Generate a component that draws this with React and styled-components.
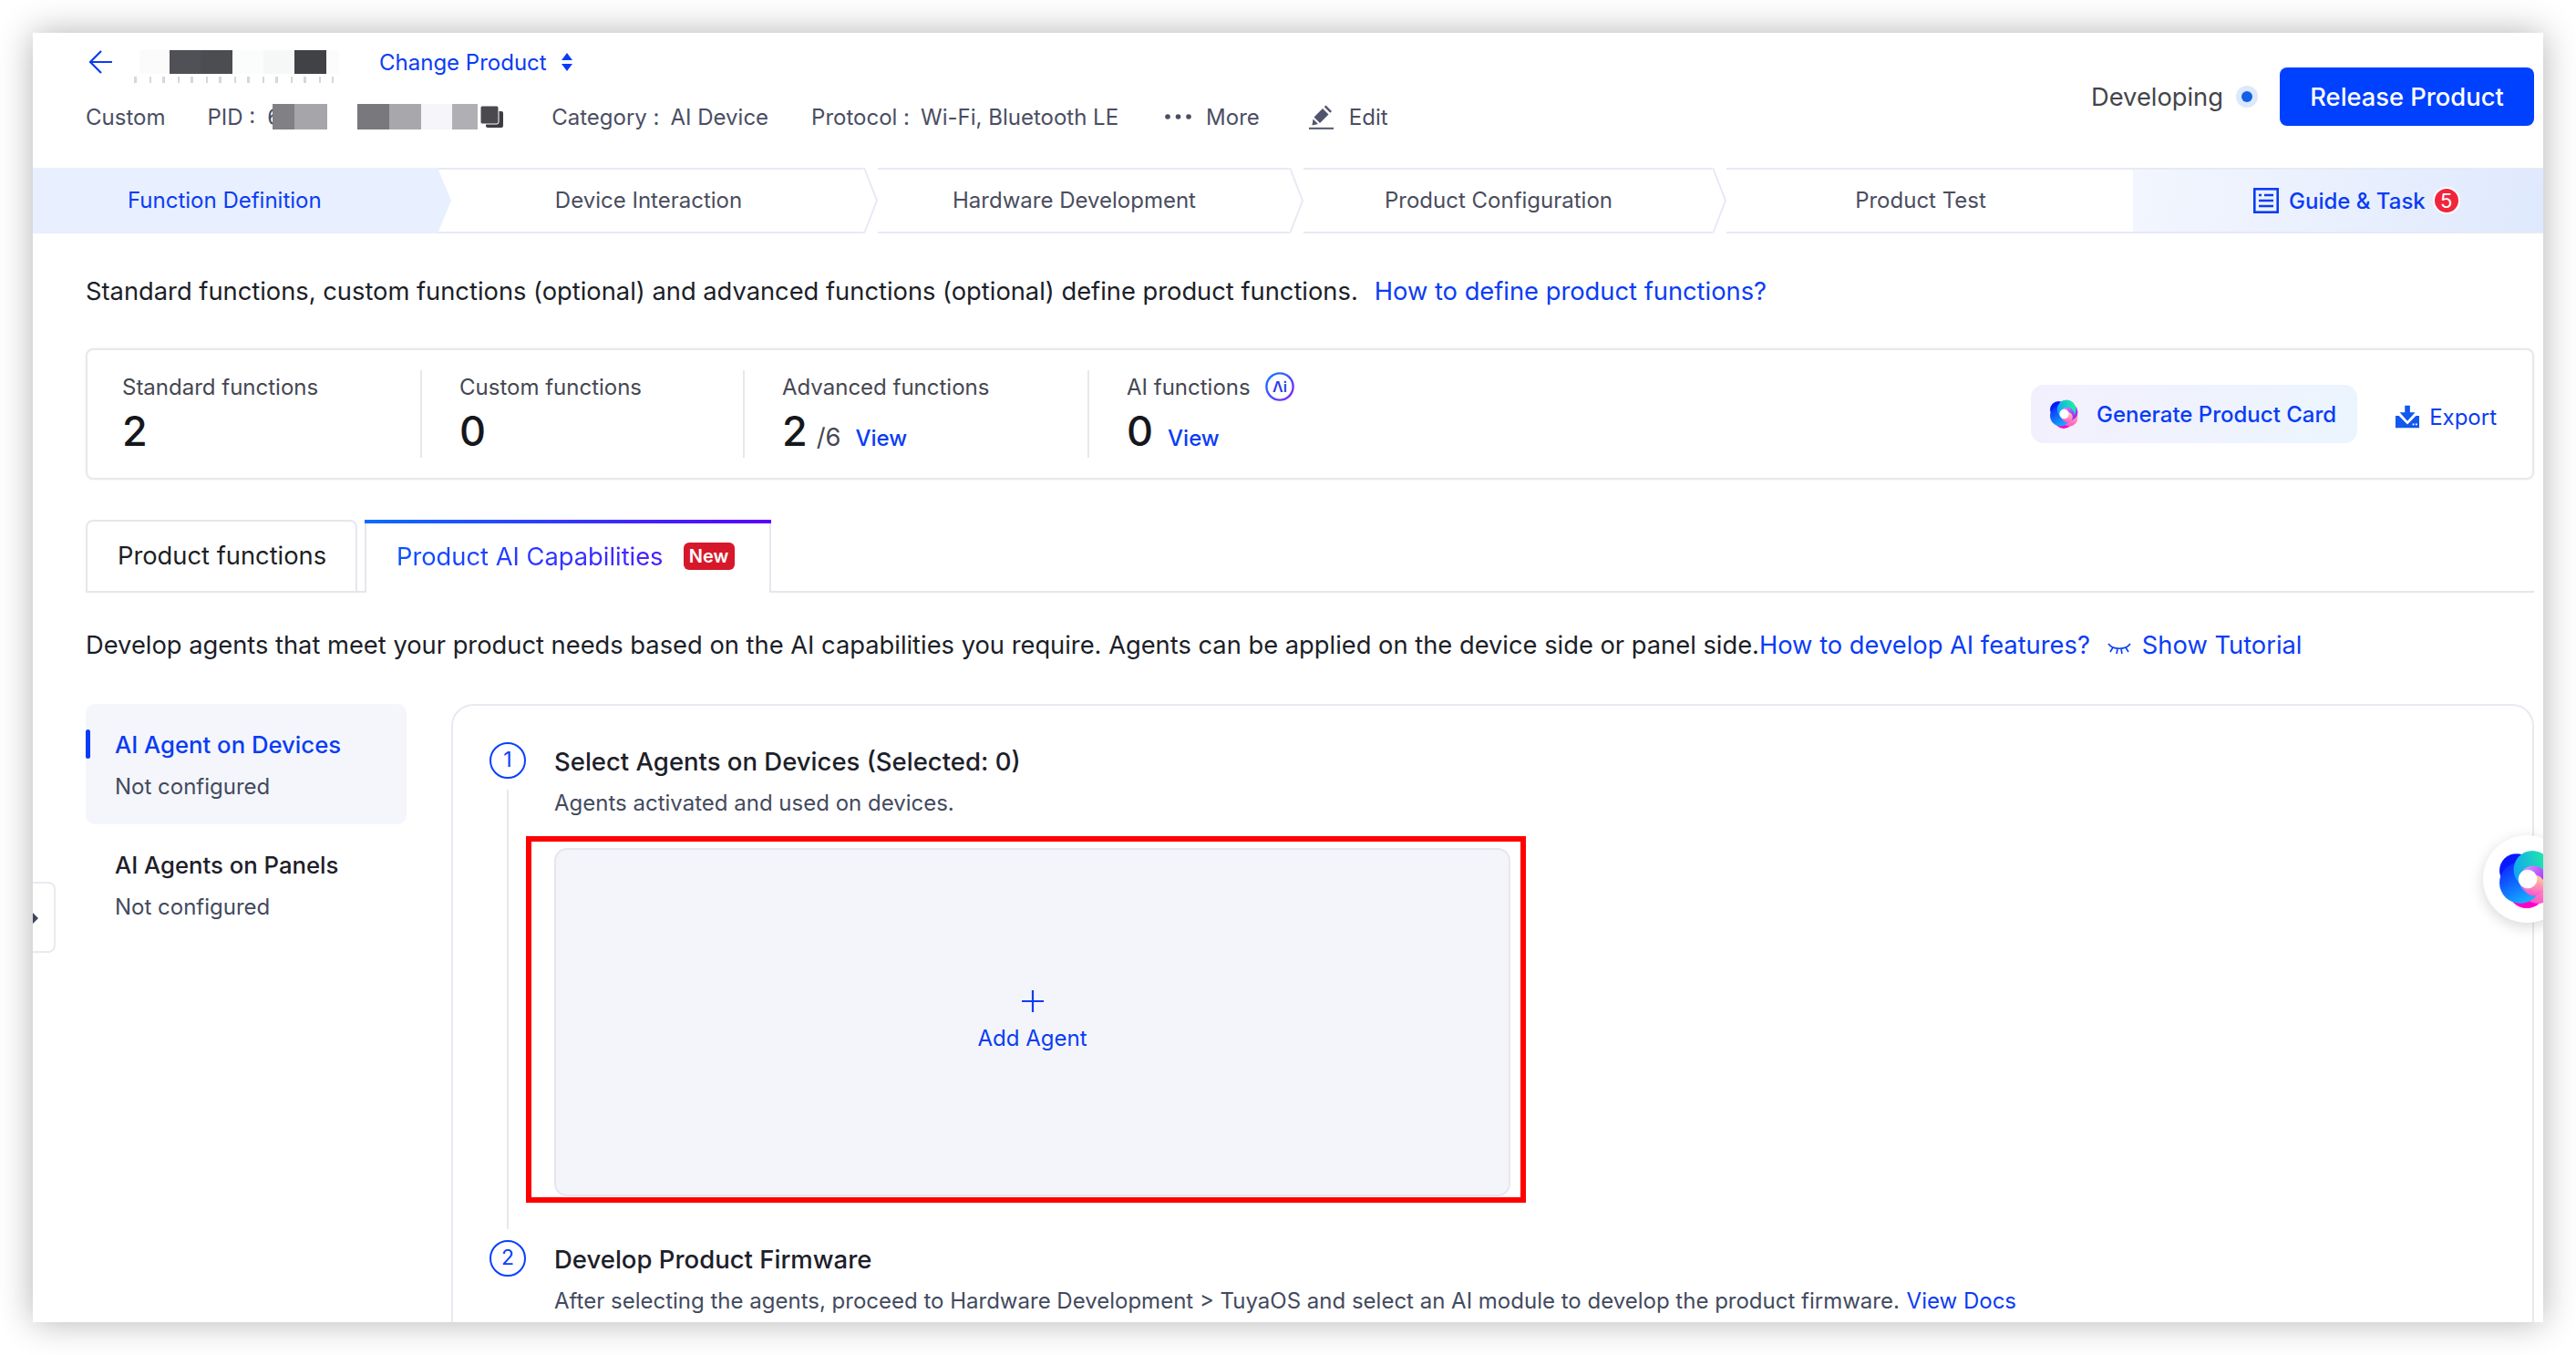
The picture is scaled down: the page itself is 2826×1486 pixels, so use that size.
import React from 'react';
import styled, { createGlobalStyle } from 'styled-components';

const Global = createGlobalStyle`
  html, body { margin: 0; padding: 0; background: #fff; }
  * { box-sizing: border-box; }
  body { font-family: Inter, "Noto Sans CJK SC", sans-serif; }
`;

const Page = styled.div`
  width: 2826px;
  height: 1486px;
  padding: 36px;
  overflow: hidden;
`;

const Window = styled.div`
  position: relative;
  width: 2754px;
  height: 1414px;
  background: #fff;
  overflow: hidden;
  box-shadow: 0 0 36px rgba(0, 0, 0, 0.3);
`;

/* watermark */
const Marks = styled.div`
  position: absolute;
  inset: 0;
  overflow: hidden;
  pointer-events: none;
  z-index: 5;
`;

const MarkRow = styled.div`
  display: flex;
  height: 172px;
  margin-left: ${(p) => p.$shift}px;
`;

const Mark = styled.span`
  flex: 0 0 402px;
  font-size: 38px;
  line-height: 172px;
  color: rgba(30, 30, 60, 0.022);
  white-space: nowrap;
  transform: rotate(-30deg);
`;

/* header */
const Head = styled.header`
  display: flex;
  justify-content: space-between;
  height: 148px;
  padding: 8px 10px 0 58px;
`;

const HeadLeft = styled.div`
  display: flex;
  flex-direction: column;
  gap: 12px;
`;

const HeadRow = styled.div`
  display: flex;
  align-items: center;
  height: 48px;
  font-size: 24px;
  color: #4a4e63;
  white-space: nowrap;
`;

const Redact = styled.div`
  position: relative;
  display: flex;
  flex: 0 0 auto;
  height: ${(p) => p.$h}px;
  margin: ${(p) => p.$m || '0'};
`;

const Patch = styled.span`
  display: block;
  width: ${(p) => p.$w}px;
  background: ${(p) => p.$c};
`;

const Crumbs = styled.span`
  position: absolute;
  left: -6px;
  right: 6px;
  top: 29px;
  height: 7px;
  background: repeating-linear-gradient(90deg, #8a8c94 0 3px, transparent 3px 17px, #8a8c94 17px 19px, transparent 19px 31px);
  opacity: 0.35;
`;

const BlueLink = styled.a`
  color: #0a3cf5;
  font-size: ${(p) => p.$size || 24}px;
  margin: ${(p) => p.$m || '0'};
  white-space: nowrap;
`;

const MetaItem = styled.span`
  display: inline-flex;
  align-items: center;
  margin-left: ${(p) => p.$ml || 0}px;
`;

const MetaKey = styled.span`
  margin-right: ${(p) => p.$mr || 14}px;
`;

const PidStart = styled.span`
  display: block;
  width: 6px;
  overflow: hidden;
`;

const HeadRight = styled.div`
  display: flex;
  align-items: center;
  height: 64px;
  margin-top: 30px;
`;

const Status = styled.span`
  font-size: 27.3px;
  color: #444549;
`;

const StatusDot = styled.span`
  display: flex;
  align-items: center;
  justify-content: center;
  width: 24px;
  height: 24px;
  margin: 0 24px 0 14px;
  border-radius: 50%;
  background: #dce8fb;

  &::after {
    content: '';
    width: 12px;
    height: 12px;
    border-radius: 50%;
    background: #1260e8;
  }
`;

const Release = styled.button`
  width: 279px;
  height: 64px;
  border: 0;
  border-radius: 8px;
  background: #0040ff;
  color: #fff;
  font: 500 27.3px Inter, sans-serif;
`;

/* steps */
const Steps = styled.nav`
  display: flex;
  height: 72px;
  font-size: 24px;
  color: #4a4d5e;
`;

const ActiveStep = styled.div`
  flex: 0 0 459px;
  margin-right: -15px;
  padding-left: 104px;
  line-height: 72px;
  color: #0a3cf5;
  background: #e8effe;
  clip-path: polygon(0 0, 444px 0, 459px 50%, 444px 100%, 0 100%);
  position: relative;
  z-index: 1;
`;

const Step = styled.div`
  position: relative;
  flex: 0 0 ${(p) => p.$w}px;
  padding-right: 4px;
  line-height: 68px;
  text-align: center;
  border-top: 2px solid #e6eaf5;
  border-bottom: 2px solid #e6eaf5;
`;

const Chevron = styled.svg`
  position: absolute;
  top: -2px;
  right: -16px;
  width: 16px;
  height: 72px;
  background: #fff;
  z-index: 1;
`;

const Guide = styled.div`
  flex: 1;
  display: flex;
  align-items: center;
  padding-left: 132px;
  color: #0a3cf5;
  font-weight: 500;
  background: linear-gradient(100deg, #f3f6fe 0%, #dfe9fd 100%);
  border-top: 2px solid #e6eaf5;
  border-bottom: 2px solid #e6eaf5;
`;

const Badge = styled.span`
  display: flex;
  align-items: center;
  justify-content: center;
  width: 30px;
  height: 30px;
  margin-left: 8px;
  border: 2px solid #fff;
  border-radius: 50%;
  background: #f0263c;
  color: #fff;
  font-size: 22px;
  font-weight: 400;
`;

/* content */
const Content = styled.main`
  padding: 46px 10px 0 58px;
`;

const Para = styled.p`
  margin: ${(p) => p.$m || '0'};
  font-size: 27.3px;
  line-height: 36px;
  color: #1b1e28;
  white-space: nowrap;
`;

const StatCard = styled.section`
  display: flex;
  align-items: center;
  height: 144px;
  margin-top: 44px;
  padding-right: 39px;
  border: 2px solid #e8e8ec;
  border-radius: 8px;
  box-shadow: 0 0 3px rgba(0, 0, 0, 0.06);
`;

const Stat = styled.div`
  flex: 0 0 ${(p) => p.$w}px;
  height: 96px;
  padding-left: ${(p) => p.$pl}px;
  border-right: ${(p) => (p.$last ? '0' : '2px solid #e8e8ec')};
`;

const StatLabel = styled.div`
  display: flex;
  align-items: center;
  gap: 16px;
  height: 36px;
  font-size: 24px;
  color: #454752;
`;

const StatValue = styled.div`
  display: flex;
  align-items: baseline;
  height: 56px;
  margin-top: 3px;
  font-size: 45px;
  line-height: 56px;
  font-weight: 500;
  color: #16171c;
`;

const StatTotal = styled.span`
  margin-left: 10px;
  font-size: 27.3px;
  font-weight: 400;
  color: #454752;
`;

const GenerateBtn = styled.button`
  display: flex;
  align-items: center;
  gap: 20px;
  width: 358px;
  height: 64px;
  margin-left: auto;
  padding: 0 0 0 20px;
  border: 0;
  border-radius: 14px;
  background: linear-gradient(100deg, #f3f0fd 0%, #ebf5fe 100%);
  color: #0a3cf5;
  font: 500 24px Inter, sans-serif;
  white-space: nowrap;
`;

const Export = styled.span`
  display: flex;
  align-items: center;
  gap: 11px;
  width: 111px;
  margin: 6px 0 0 42px;
  color: #0a3cf5;
  font-size: 24px;
`;

const Tabs = styled.div`
  display: flex;
  gap: 8px;
  height: 80px;
  margin-top: 44px;
  border-bottom: 2px solid #e6e6ec;
`;

const Tab = styled.div`
  width: 298px;
  height: 80px;
  padding-left: 33px;
  border: 2px solid #e6e6ec;
  border-radius: 8px 8px 0 0;
  font-size: 27.3px;
  line-height: 76px;
  color: #1d1f25;
`;

const ActiveTab = styled.div`
  position: relative;
  display: flex;
  align-items: center;
  width: 446px;
  height: 80px;
  padding-left: 33px;
  background: #fff;
  border: 2px solid #e6e6ec;
  border-top: 0;
  border-bottom: 0;
  font-size: 27.3px;

  &::before {
    content: '';
    position: absolute;
    top: 0;
    left: -2px;
    right: -2px;
    height: 4px;
    background: linear-gradient(90deg, #0a6cff, #5a00ff);
  }
`;

const TabText = styled.span`
  background: linear-gradient(90deg, #0a52ff, #4a20ff);
  -webkit-background-clip: text;
  background-clip: text;
  color: transparent;
`;

const NewTag = styled.span`
  margin-left: 22px;
  width: 56px;
  height: 30px;
  border-radius: 6px;
  background: #d7182a;
  color: #fff;
  font-size: 20px;
  font-weight: 600;
  line-height: 30px;
  text-align: center;
`;

const TutorialIcon = styled.svg`
  width: 26px;
  height: 18px;
  margin: 0 12px 0 19px;
  vertical-align: -3px;
`;

const Work = styled.div`
  display: flex;
  gap: 49px;
  margin-top: 46px;
`;

const Side = styled.aside`
  flex: 0 0 352px;
  display: flex;
  flex-direction: column;
`;

const SideItem = styled.div`
  position: relative;
  height: 132px;
  padding: 27px 31px 0 32px;
  border-radius: 10px;
  background: ${(p) => (p.$active ? '#f4f6fb' : 'transparent')};

  ${(p) =>
    p.$active &&
    `&::before {
      content: '';
      position: absolute;
      left: 0;
      top: 28px;
      width: 5px;
      height: 32px;
      border-radius: 3px;
      background: #0a3cf5;
    }`}
`;

const SideTitle = styled.div`
  font-size: 25.7px;
  line-height: 36px;
  font-weight: 500;
  color: ${(p) => (p.$active ? '#0a3cf5' : '#1d2029')};
`;

const SideSub = styled.div`
  margin-top: 10px;
  font-size: 24px;
  line-height: 36px;
  color: #434a5e;
`;

const Collapse = styled.div`
  position: absolute;
  left: 0;
  top: 931px;
  width: 25px;
  height: 78px;
  border: 2px solid #e8eaf0;
  border-left: 0;
  border-radius: 0 8px 8px 0;
  background: #fff;
  z-index: 2;

  &::after {
    content: '';
    position: absolute;
    left: 0;
    top: 32px;
    border: 6px solid transparent;
    border-left: 6px solid #3f4659;
  }
`;

const Panel = styled.section`
  flex: 1;
  min-height: 800px;
  padding: 40px 0 0 40px;
  border: 2px solid #e8e9f0;
  border-radius: 24px 24px 0 0;
`;

const Block = styled.div`
  display: flex;
  gap: 31px;
`;

const Rail = styled.div`
  flex: 0 0 40px;
  display: flex;
  flex-direction: column;
  align-items: center;
`;

const Num = styled.span`
  flex: 0 0 40px;
  width: 40px;
  height: 40px;
  border: 2.5px solid #0a40ff;
  border-radius: 50%;
  color: #0a40ff;
  font-size: 23px;
  line-height: 35px;
  text-align: center;
`;

const RailLine = styled.span`
  width: 2px;
  height: 482px;
  margin: 12px 0;
  background: #e6e8ee;
`;

const BlockTitle = styled.h3`
  margin: 0;
  font-size: 27.5px;
  line-height: 42px;
  font-weight: 500;
  color: #1d2029;
`;

const BlockSub = styled.p`
  margin: 7px 0 0;
  font-size: 24px;
  line-height: 36px;
  color: #434a5e;
  white-space: nowrap;
`;

const AddCard = styled.div`
  position: relative;
  display: flex;
  flex-direction: column;
  align-items: center;
  justify-content: center;
  gap: 11px;
  width: 1049px;
  height: 382px;
  margin-top: 31px;
  border: 2px solid #e6e7ee;
  border-radius: 14px;
  background: #f4f5fa;
  color: #0a3cf5;
  font-size: 24px;
  line-height: 36px;

  &::after {
    content: '';
    position: absolute;
    left: -33px;
    top: -15px;
    right: -19px;
    bottom: -9px;
    border: 6px solid #ff0000;
  }
`;

const Floating = styled.div`
  position: absolute;
  left: 2688px;
  top: 880px;
  display: flex;
  align-items: center;
  justify-content: center;
  width: 96px;
  height: 96px;
  border-radius: 50%;
  background: #fff;
  box-shadow: 0 4px 16px rgba(0, 0, 0, 0.16);
  z-index: 3;
`;

// colourful swirl logo used on the card button and the floating button
const Swirl = ({ size, id }) => (
  <svg width={size} height={size} viewBox="-31 -31 62 62">
    <defs>
      <linearGradient id={`${id}a`} x1="0" y1="0" x2="0.6" y2="1">
        <stop offset="0" stopColor="#0a18ff" />
        <stop offset="1" stopColor="#16b0ff" />
      </linearGradient>
      <linearGradient id={`${id}b`} x1="0" y1="0.6" x2="1" y2="0.3">
        <stop offset="0" stopColor="#10a4f4" />
        <stop offset="1" stopColor="#22f0a0" />
      </linearGradient>
      <linearGradient id={`${id}c`} x1="0" y1="0" x2="1" y2="0.6">
        <stop offset="0" stopColor="#eaa8ff" />
        <stop offset="1" stopColor="#9a28ff" />
      </linearGradient>
      <linearGradient id={`${id}d`} x1="0.5" y1="0" x2="0.3" y2="1">
        <stop offset="0" stopColor="#ffd09a" />
        <stop offset="1" stopColor="#ff50d0" />
      </linearGradient>
    </defs>
    <circle cx="0" cy="11" r="20" fill="#ff00c8" />
    <circle cx="12" cy="8" r="18" fill={`url(#${id}d)`} />
    <circle cx="12" cy="-4" r="18" fill={`url(#${id}c)`} />
    <circle cx="-11" cy="-9" r="18" fill="#0a18ff" />
    <circle cx="-7" cy="4" r="22" fill={`url(#${id}a)`} />
    <circle cx="6" cy="-10" r="20" fill={`url(#${id}b)`} />
    <circle cx="7" cy="1" r="15" fill={`url(#${id}c)`} />
    <circle cx="8" cy="7" r="11" fill={`url(#${id}d)`} />
    <circle cx="1" cy="0" r="10" fill="#fff" />
  </svg>
);

const ArrowIcon = () => (
  <svg width="26" height="26" viewBox="0 0 26 26" fill="none" stroke="#0a3cf5" strokeWidth="2.2" style={{ marginLeft: 3 }}>
    <path d="M26 13H2M14 1 2 13l12 12" />
  </svg>
);

const SortIcon = () => (
  <svg width="14" height="20" viewBox="0 0 14 20" fill="#0a3cf5" style={{ marginLeft: 15 }}>
    <path d="M7 0l6 8H1zM7 20l-6-8h12z" />
  </svg>
);

const CopyIcon = () => (
  <svg width="25" height="24" viewBox="0 0 25 24" fill="#3d3d40" style={{ marginLeft: 3 }}>
    <rect x="6" y="6" width="19" height="18" rx="2" />
    <rect x="0" y="0" width="20" height="20" rx="2" fill="#4a4a4e" stroke="#fff" />
  </svg>
);

const DotsIcon = () => (
  <svg width="29" height="6" viewBox="0 0 29 6" fill="#4a4e63" style={{ marginRight: 16 }}>
    <circle cx="3" cy="3" r="2.8" />
    <circle cx="14.5" cy="3" r="2.8" />
    <circle cx="26" cy="3" r="2.8" />
  </svg>
);

const EditIcon = () => (
  <svg width="27" height="27" viewBox="0 0 27 27" style={{ marginRight: 17 }}>
    <path d="M5.5 13.5 15 4l6.5 6.5-9.5 9.5z" fill="#50556d" />
    <path d="M4.5 15.5 10 21l-6.5 1.5z" fill="#50556d" />
    <path d="M16.8 2.2 18.5 0.5 25 7l-1.7 1.7z" fill="#50556d" />
    <path d="M0 25.8h27" stroke="#50556d" strokeWidth="2" />
  </svg>
);

const GuideIcon = () => (
  <svg width="28" height="28" viewBox="0 0 28 28" fill="none" stroke="#0a3cf5" strokeWidth="2.6" style={{ marginRight: 11 }}>
    <rect x="1.3" y="1.3" width="25.4" height="25.4" />
    <path d="M6 8h3M12 8h10M6 14h16M6 20h16" />
  </svg>
);

const AiIcon = () => (
  <svg width="32" height="32" viewBox="0 0 32 32">
    <defs>
      <linearGradient id="aiRing" x1="0" y1="0" x2="1" y2="1">
        <stop offset="0" stopColor="#0a7cff" />
        <stop offset="1" stopColor="#8a20ff" />
      </linearGradient>
    </defs>
    <circle cx="16" cy="16" r="14.6" fill="none" stroke="url(#aiRing)" strokeWidth="2.4" />
    <text x="16" y="21.5" textAnchor="middle" fontSize="16" fontWeight="600" fontFamily="Inter, sans-serif" fill="#2a3cf0">
      Λi
    </text>
  </svg>
);

const ExportIcon = () => (
  <svg width="28" height="26" viewBox="0 0 28 26" fill="#1257ee">
    <path d="M11 0h6v8h6L14 18 5 8h6z" />
    <path d="M0 12h4l10 10 10-10h4v14H0z" />
    <rect x="20" y="21" width="2" height="2" fill="#fff" />
    <rect x="23.5" y="21" width="2" height="2" fill="#fff" />
  </svg>
);

const LashIcon = () => (
  <TutorialIcon viewBox="0 0 26 18" fill="none" stroke="#0a3cf5" strokeWidth="1.6">
    <path d="M1 4c5 7 19 7 24 0" />
    <path d="M6 8 3 13M11 10l-1 5M15 10l1 5M20 8l3 5" />
  </TutorialIcon>
);

const PlusIcon = () => (
  <svg width="24" height="24" viewBox="0 0 24 24" stroke="#0a3cf5" strokeWidth="2.2">
    <path d="M12 0v24M0 12h24" />
  </svg>
);

const stepList = [
  { label: 'Device Interaction', w: 467 },
  { label: 'Hardware Development', w: 467 },
  { label: 'Product Configuration', w: 464 },
];

const stats = [
  { label: 'Standard functions', value: '2', w: 367, pl: 38 },
  { label: 'Custom functions', value: '0', w: 354, pl: 41 },
  { label: 'Advanced functions', value: '2', total: '/6', view: true, w: 378, pl: 41 },
  { label: 'AI functions', value: '0', ai: true, view: true, w: 400, pl: 41, last: true },
];

const App = () => {
  return (
    <Page>
      <Global />
      <Window>
        <Head>
          <HeadLeft>
            <HeadRow>
              <ArrowIcon />
              <Redact $h={26} $m="0 44px 0 30px">
                <Crumbs />
                <Patch $w={33} $c="#fbfbfc" />
                <Patch $w={34} $c="#505156" />
                <Patch $w={35} $c="#4c4d51" />
                <Patch $w={34} $c="#fbfcfc" />
                <Patch $w={34} $c="#f6f8f8" />
                <Patch $w={35} $c="#414246" />
                <Patch $w={14} $c="#fcfcfc" />
              </Redact>
              <BlueLink>Change Product</BlueLink>
              <SortIcon />
            </HeadRow>
            <HeadRow>
              <span>Custom</span>
              <MetaItem $ml={46}>
                <MetaKey $mr={13}>PID :</MetaKey>
                <PidStart>6</PidStart>
              </MetaItem>
              <Redact $h={28}>
                <Patch $w={24} $c="#808085" />
                <Patch $w={36} $c="#a6a6aa" />
                <Patch $w={33} $c="#fff" />
                <Patch $w={35} $c="#78787d" />
                <Patch $w={35} $c="#a8a8ac" />
                <Patch $w={34} $c="#f5f5fa" />
                <Patch $w={28} $c="#b0b0b4" />
              </Redact>
              <CopyIcon />
              <MetaItem $ml={53}>
                <MetaKey $mr={12}>Category :</MetaKey>AI Device
              </MetaItem>
              <MetaItem $ml={47}>
                <MetaKey $mr={12}>Protocol :</MetaKey>Wi-Fi, Bluetooth LE
              </MetaItem>
              <MetaItem $ml={51}>
                <DotsIcon />
                More
              </MetaItem>
              <MetaItem $ml={54}>
                <EditIcon />
                Edit
              </MetaItem>
            </HeadRow>
          </HeadLeft>
          <HeadRight>
            <Status>Developing</Status>
            <StatusDot />
            <Release>Release Product</Release>
          </HeadRight>
        </Head>

        <Steps>
          <ActiveStep>Function Definition</ActiveStep>
          {stepList.map((s) => (
            <Step key={s.label} $w={s.w}>
              {s.label}
              <Chevron viewBox="0 0 16 72" fill="none" stroke="#e6eaf5" strokeWidth="2">
                <path d="M1 0 15 36 1 72" />
              </Chevron>
            </Step>
          ))}
          <Step $w={462}>Product Test</Step>
          <Guide>
            <GuideIcon />
            Guide &amp; Task
            <Badge>5</Badge>
          </Guide>
        </Steps>

        <Content>
          <Para>
            Standard functions, custom functions (optional) and advanced functions (optional) define product functions.
            <BlueLink $size={27.3} $m="0 0 0 18px">
              How to define product functions?
            </BlueLink>
          </Para>

          <StatCard>
            {stats.map((s) => (
              <Stat key={s.label} $w={s.w} $pl={s.pl} $last={s.last}>
                <StatLabel>
                  {s.label}
                  {s.ai && <AiIcon />}
                </StatLabel>
                <StatValue>
                  {s.value}
                  {s.total && <StatTotal>{s.total}</StatTotal>}
                  {s.view && <BlueLink $m="0 0 0 16px">View</BlueLink>}
                </StatValue>
              </Stat>
            ))}
            <GenerateBtn>
              <Swirl size={32} id="sw1" />
              Generate Product Card
            </GenerateBtn>
            <Export>
              <ExportIcon />
              Export
            </Export>
          </StatCard>

          <Tabs>
            <Tab>Product functions</Tab>
            <ActiveTab>
              <TabText>Product AI Capabilities</TabText>
              <NewTag>New</NewTag>
            </ActiveTab>
          </Tabs>

          <Para $m="40px 0 0">
            Develop agents that meet your product needs based on the AI capabilities you require. Agents can be applied on the device side or panel side.
            <BlueLink $size={27.3}>How to develop AI features?</BlueLink>
            <LashIcon />
            <BlueLink $size={27.3}>Show Tutorial</BlueLink>
          </Para>

          <Work>
            <Side>
              <SideItem $active>
                <SideTitle $active>AI Agent on Devices</SideTitle>
                <SideSub>Not configured</SideSub>
              </SideItem>
              <SideItem>
                <SideTitle>AI Agents on Panels</SideTitle>
                <SideSub>Not configured</SideSub>
              </SideItem>
            </Side>
            <Panel>
              <Block>
                <Rail>
                  <Num>1</Num>
                  <RailLine />
                </Rail>
                <div>
                  <BlockTitle>Select Agents on Devices (Selected: 0)</BlockTitle>
                  <BlockSub>Agents activated and used on devices.</BlockSub>
                  <AddCard>
                    <PlusIcon />
                    Add Agent
                  </AddCard>
                </div>
              </Block>
              <Block>
                <Rail>
                  <Num>2</Num>
                </Rail>
                <div>
                  <BlockTitle>Develop Product Firmware</BlockTitle>
                  <BlockSub>
                    After selecting the agents, proceed to Hardware Development &gt; TuyaOS and select an AI module to develop the product firmware.
                    <BlueLink $m="0 0 0 1px"> View Docs</BlueLink>
                  </BlockSub>
                </div>
              </Block>
            </Panel>
          </Work>
        </Content>

        <Collapse />
        <Floating>
          <Swirl size={64} id="sw2" />
        </Floating>

        <Marks>
          {[0, 1, 2, 3, 4, 5, 6, 7, 8].map((r) => (
            <MarkRow key={r} $shift={r % 2 ? -120 : 60}>
              {[0, 1, 2, 3, 4, 5, 6, 7].map((c) => (
                <Mark key={c}>涂鸦智能-828</Mark>
              ))}
            </MarkRow>
          ))}
        </Marks>
      </Window>
    </Page>
  );
};

export default App;
